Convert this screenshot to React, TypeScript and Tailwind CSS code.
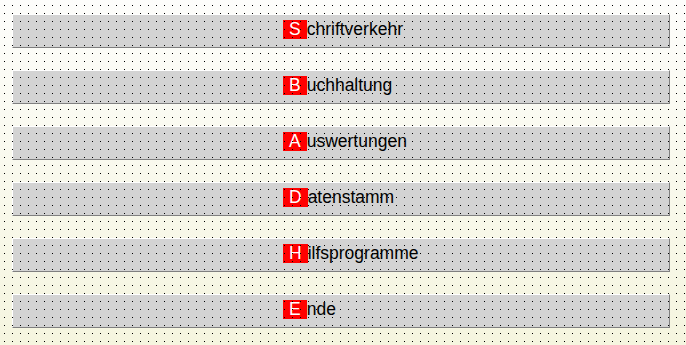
const items = [
  { key: "S", rest: "chriftverkehr" },
  { key: "B", rest: "uchhaltung" },
  { key: "A", rest: "uswertungen" },
  { key: "D", rest: "atenstamm" },
  { key: "H", rest: "ilfsprogramme" },
  { key: "E", rest: "nde" },
];

function MenuBar({ letter, rest }: { letter: string; rest: string }) {
  return (
    <button
      type="button"
      className="flex h-[34px] w-[658px] items-start border border-t-white border-l-white border-b-[#808080] border-r-[#808080] bg-[#d3d3d3] pt-[5px] pl-[270px] text-left"
    >
      <span className="flex h-[19px] items-center bg-[#ff0000] px-[6px] text-[17.5px] leading-[19px] text-white">
        {letter}
      </span>
      <span className="text-[17.5px] leading-[19px] text-black">{rest}</span>
    </button>
  );
}

export default function App() {
  return (
    <div
      className="relative h-screen w-full overflow-hidden bg-gradient-to-b from-[#fdfdfb] to-[#f5f5df]"
      style={{ fontFamily: '"Liberation Sans", Arial, sans-serif' }}
    >
      <div className="flex flex-col gap-[22px] pt-[14px] pl-[12px]">
        {items.map((item) => (
          <MenuBar key={item.key} letter={item.key} rest={item.rest} />
        ))}
      </div>
      {/* dotted raster over everything */}
      <div className="pointer-events-none absolute inset-0 bg-[conic-gradient(at_1px_1px,#0000_75%,#000_0)] bg-[length:8px_8px] bg-[position:4px_5px]" />
    </div>
  );
}
